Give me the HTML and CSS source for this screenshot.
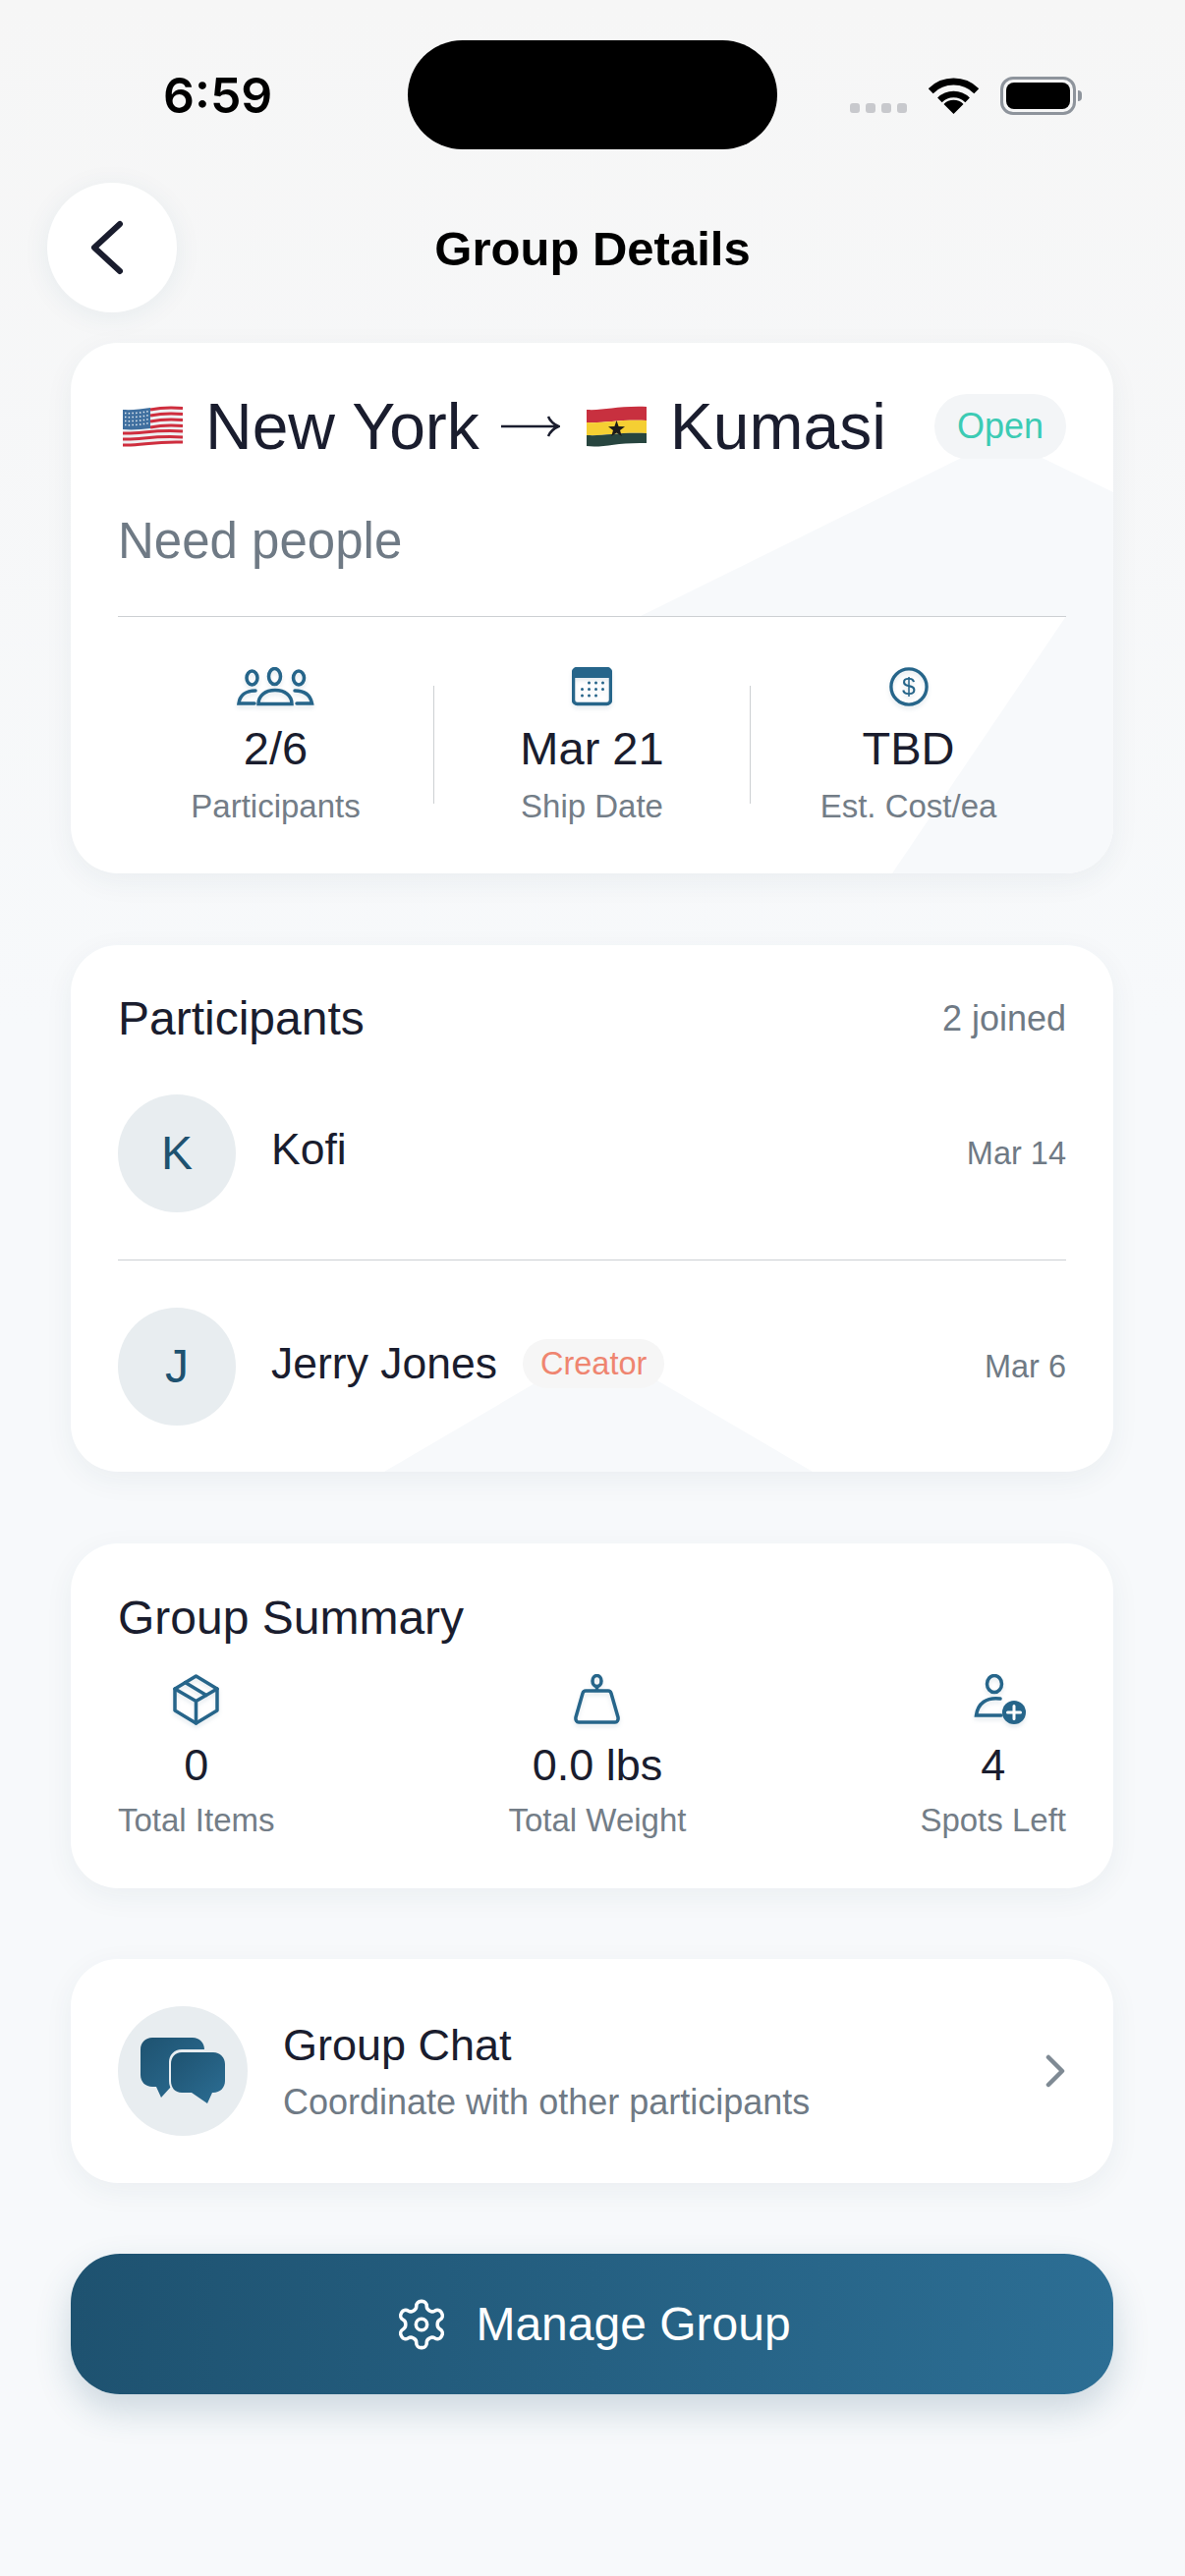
FILE: index.html
```html
<!DOCTYPE html>
<html>
	<head>
		<meta charset="utf-8" />
		<meta name="viewport" content="width=device-width, initial-scale=1" />
		<title>Group Details</title>
		<link rel="stylesheet" href="styles.css">
	</head>
	<body>
		<div id="page">
			<div class="statusbar">
				<div class="time">6:59</div>
				<div class="island"></div>
				<div class="status-icons">
					<div class="signal"><i></i><i></i><i></i><i></i></div>
					<svg class="wifi" width="51" height="37" viewBox="0 0 51 37">
						<path d="M2.2 13.7A33 33 0 0 1 48.8 13.7" fill="none" stroke="#000" stroke-width="7" />
						<path d="M11.4 22.9A20 20 0 0 1 39.6 22.9" fill="none" stroke="#000" stroke-width="6.5" />
						<path d="M25.5 37L15.5 27A14 14 0 0 1 35.5 27Z" fill="#000" />
					</svg>
					<div class="battery"><div class="battery-level"></div></div>
				</div>
			</div>

			<div class="header">
				<div class="back">
					<svg width="38" height="60" viewBox="0 0 38 60"><path d="M32 6L6 30L32 54" fill="none" stroke="#1a1d2e" stroke-width="6" stroke-linecap="round" stroke-linejoin="round" /></svg>
				</div>
				<div class="title">Group Details</div>
			</div>

			<div id="content">
				<div class="card card-route">
					<div class="route">
						<svg class="flag flag-us" width="61" height="42" viewBox="0 0 61 42">
							<path d="M0 4C18 5 30 0 61 1V38C30 37 18 43 0 41Z" fill="#eef0f2" />
							<g fill="none" stroke="#cf2e3e" stroke-width="3">
								<path d="M28 4C40 1.500 50 1.500 61 2.500" />
								<path d="M28 10C40 7.500 50 7.500 61 8.500" />
								<path d="M28 16C40 13.500 50 13.500 61 14.500" />
								<path d="M28 22C40 19.500 50 19.500 61 20.500" />
								<path d="M0 28C18 29 30 24 61 26" />
								<path d="M0 34C18 35 30 30 61 32" />
								<path d="M0 40C18 41 30 36 61 37" />
							</g>
							<path d="M0 4C10 4.500 19 3.500 28 2V23C19 24 10 25 0 24Z" fill="#3f6f9f" />
							<g fill="none" stroke="#e6edf3" stroke-width="1.500" stroke-dasharray="1.500 2.200">
								<path d="M2 7.500C10 8 19 7 26 5.800" />
								<path d="M2 11.500C10 12 19 11 26 9.800" />
								<path d="M2 15.500C10 16 19 15 26 13.800" />
								<path d="M2 19.500C10 20 19 19 26 17.800" />
							</g>
						</svg>
						<span class="place">New York</span>
						<svg class="arrow" width="60" height="24" viewBox="0 0 60 24" aria-label="to"><path d="M0 12H58M48 2C50 7 54 10 58.500 12C54 14 50 17 48 22" fill="none" stroke="#1a1d2e" stroke-width="2.500" /></svg>
						<svg class="flag flag-gh" width="61" height="42" viewBox="0 0 61 42">
							<path d="M0 4C18 5 30 0 61 1V15C30 14 18 18 0 17Z" fill="#c8303f" />
							<path d="M0 17C18 18 30 14 61 15V28C30 27 18 31 0 30Z" fill="#f5cf33" />
							<path d="M0 30C18 31 30 27 61 28V38C30 37 18 43 0 41Z" fill="#27453f" />
							<path d="M30.500 15L32.600 21L39 21.200L34 25L35.800 31L30.500 27.500L25.200 31L27 25L22 21.200L28.400 21Z" fill="#1a1a1a" />
						</svg>
						<span class="place">Kumasi</span>
						<span class="badge badge-open">Open</span>
					</div>
					<div class="note">Need people</div>
					<div class="rule"></div>
					<div class="stats">
						<div class="stat">
							<svg class="icon" width="79" height="40" viewBox="0 0 79 40">
								<ellipse cx="15.500" cy="11" rx="5.500" ry="7" />
								<ellipse cx="38.500" cy="9.500" rx="6" ry="8" />
								<ellipse cx="63" cy="11" rx="5.500" ry="7" />
								<path d="M19 24C9 24 3 29 2 37H18" />
								<path d="M59 24C69 24 75 29 76.500 37H61" />
								<path d="M22 37.500C22 29 29 23.500 39 23.500C49 23.500 56 29 56 37.500Z" />
							</svg>
							<div class="stat-value">2/6</div>
							<div class="stat-label">Participants</div>
						</div>
						<div class="stat-sep"></div>
						<div class="stat">
							<svg class="icon" width="41" height="40" viewBox="0 0 41 40">
								<rect x="1.500" y="1.500" width="38" height="36" rx="4" />
								<path d="M1.500 11V6A4.500 4.500 0 0 1 6 1.500H35A4.500 4.500 0 0 1 39.500 6V11Z" class="solid" />
								<g class="solid">
									<circle cx="17.500" cy="16" r="1.500" /><circle cx="24.500" cy="16" r="1.500" /><circle cx="31.500" cy="16" r="1.500" />
									<circle cx="10.500" cy="22.500" r="1.500" /><circle cx="17.500" cy="22.500" r="1.500" /><circle cx="24.500" cy="22.500" r="1.500" /><circle cx="31.500" cy="22.500" r="1.500" />
									<circle cx="10.500" cy="29" r="1.500" /><circle cx="17.500" cy="29" r="1.500" /><circle cx="24.500" cy="29" r="1.500" />
								</g>
							</svg>
							<div class="stat-value">Mar 21</div>
							<div class="stat-label">Ship Date</div>
						</div>
						<div class="stat-sep"></div>
						<div class="stat">
							<svg class="icon" width="42" height="42" viewBox="0 0 42 42">
								<circle cx="21" cy="21" r="19" />
								<text x="21" y="29.500" text-anchor="middle" class="icon-text">$</text>
							</svg>
							<div class="stat-value">TBD</div>
							<div class="stat-label">Est. Cost/ea</div>
						</div>
					</div>
				</div>

				<div class="card card-people">
					<div class="card-head">
						<div class="card-title">Participants</div>
						<div class="card-count">2 joined</div>
					</div>
					<div class="person">
						<div class="avatar">K</div>
						<div class="person-name">Kofi</div>
						<div class="person-date">Mar 14</div>
					</div>
					<div class="person person-last">
						<div class="avatar">J</div>
						<div class="person-name person-name-badge">Jerry Jones<span class="badge badge-creator">Creator</span></div>
						<div class="person-date">Mar 6</div>
					</div>
				</div>

				<div class="card card-summary">
					<div class="card-title">Group Summary</div>
					<div class="summary">
						<div class="summary-item">
							<svg class="icon" width="47" height="52" viewBox="0 0 47 52">
								<path d="M23.500 2L45 15V37L23.500 50L2 37V15Z" stroke-linejoin="round" />
								<path d="M2 15L23.500 27.500L45 15M23.500 27.500V50M12.500 8.500L34 21.500" />
							</svg>
							<div class="summary-value">0</div>
							<div class="summary-label">Total Items</div>
						</div>
						<div class="summary-item">
							<svg class="icon" width="47" height="52" viewBox="0 0 47 52">
								<ellipse cx="23.500" cy="7" rx="4.500" ry="5.500" />
								<path d="M23.500 12.500V17M12 17H35C36.500 17 37.500 18 38 19.500L45 44C45.500 47 44 49 42 49H5C3 49 1.500 47 2 44L9 19.500C9.500 18 10.500 17 12 17Z" />
							</svg>
							<div class="summary-value">0.0 lbs</div>
							<div class="summary-label">Total Weight</div>
						</div>
						<div class="summary-item">
							<svg class="icon icon-add" width="55" height="52" viewBox="0 0 55 52">
								<ellipse cx="21" cy="10" rx="7.500" ry="8.500" />
								<path d="M27 25C13 23 4 30 2.500 42H28" />
								<circle cx="41" cy="39" r="12" class="solid" />
								<path d="M41 32.500V45.500M34.500 39H47.500" class="plus" />
							</svg>
							<div class="summary-value">4</div>
							<div class="summary-label">Spots Left</div>
						</div>
					</div>
				</div>

				<div class="card card-chat">
					<div class="chat-icon">
						<svg width="87" height="68" viewBox="0 0 87 68">
							<defs>
								<linearGradient id="chat-fill" x1="0" y1="0" x2="1" y2="1">
									<stop offset="0" stop-color="#1e5270" />
									<stop offset="1" stop-color="#2c6e94" />
								</linearGradient>
							</defs>
							<path d="M12 0H53C60 0 65 5 65 12V38C65 45 60 50 53 50H31L21 61L16 50H12C5 50 0 45 0 38V12C0 5 5 0 12 0Z" fill="url(#chat-fill)" />
							<path d="M42 12H74C82 12 87 18 87 25V44C87 52 82 58 74 58H74L70 68L52 58H42C34 58 29 52 29 44V25C29 18 34 12 42 12Z" fill="#e8edf0" />
							<path d="M42 15H74C81 15 86 20 86 27V44C86 51 81 56 74 56H73L68 67L52 56H42C35 56 31 51 31 44V27C31 20 35 15 42 15Z" fill="url(#chat-fill)" />
						</svg>
					</div>
					<div class="chat-text">
						<div class="chat-title">Group Chat</div>
						<div class="chat-sub">Coordinate with other participants</div>
					</div>
					<svg class="chat-go" width="22" height="34" viewBox="0 0 22 34"><path d="M4 3L18 17L4 31" fill="none" stroke="#7f8a94" stroke-width="4.500" stroke-linecap="round" stroke-linejoin="round" /></svg>
				</div>

				<div class="manage">
					<svg width="52" height="52" viewBox="1 1 22 22" fill="none" stroke="#fff" stroke-width="1.500" stroke-linecap="round" stroke-linejoin="round">
						<path d="M12.220 2h-.44a2 2 0 0 0-2 2v.18a2 2 0 0 1-1 1.730l-.43.25a2 2 0 0 1-2 0l-.15-.08a2 2 0 0 0-2.730.73l-.22.38a2 2 0 0 0 .73 2.730l.15.1a2 2 0 0 1 1 1.720v.51a2 2 0 0 1-1 1.740l-.15.09a2 2 0 0 0-.73 2.730l.22.38a2 2 0 0 0 2.730.73l.15-.08a2 2 0 0 1 2 0l.43.25a2 2 0 0 1 1 1.730V20a2 2 0 0 0 2 2h.44a2 2 0 0 0 2-2v-.18a2 2 0 0 1 1-1.730l.43-.25a2 2 0 0 1 2 0l.15.08a2 2 0 0 0 2.730-.73l.22-.39a2 2 0 0 0-.73-2.730l-.15-.08a2 2 0 0 1-1-1.740v-.5a2 2 0 0 1 1-1.740l.15-.09a2 2 0 0 0 .73-2.730l-.22-.38a2 2 0 0 0-2.730-.73l-.15.08a2 2 0 0 1-2 0l-.43-.25a2 2 0 0 1-1-1.730V4a2 2 0 0 0-2-2z" />
						<circle cx="12" cy="12" r="2.400" />
					</svg>
					<span>Manage Group</span>
				</div>
			</div>
		</div>
	</body>
</html>
```

FILE: styles.css
```css
html, body {
	margin: 0; padding: 0;
}
body {
	background: linear-gradient(#f6f6f6, #f7f9fb 40%, #f7f9fb);
	color: #1a1d2e;
	font: 36px "Liberation Sans", Arial, sans-serif;
}
#page {
	width: 1206px; height: 2622px;
	overflow: hidden;
}

/* status bar */
.statusbar {
	display: grid;
	grid-template-columns: 1fr 376px 1fr;
	align-items: center;
	height: 111px;
	padding-top: 41px;
}
.time {
	padding: 0 0 0 166px; margin-top: 1px;
	color: #000;
	font: 600 50px Inter, sans-serif;
}
.island {
	height: 111px;
	border-radius: 56px;
	background-color: #000;
}
.status-icons {
	display: flex;
	align-items: center;
	padding-left: 74px; margin-top: 1px;
}
.signal {
	display: flex;
	gap: 6px;
	margin-top: 26px;
}
.signal i {
	width: 10px; height: 10px;
	border-radius: 3px;
	background-color: #c8c9cd;
}
.wifi {
	margin-left: 22px;
}
.battery {
	position: relative;
	box-sizing: border-box;
	width: 77px; height: 39px; margin-left: 22px; padding: 3px;
	border: 3px solid #8e949c;
	border-radius: 13px;
}
.battery:after {
	content: "";
	position: absolute;
	top: 11px; right: -9px;
	width: 4px; height: 11px;
	border-radius: 0 6px 6px 0;
	background-color: #8e949c;
}
.battery-level {
	height: 100%;
	border-radius: 8px;
	background-color: #000;
}

/* header */
.header {
	display: grid;
	grid-template-columns: 132px 1fr 132px;
	align-items: center;
	height: 132px; margin-top: 34px; padding: 0 48px;
}
.back {
	display: flex;
	align-items: center;
	justify-content: center;
	width: 132px; height: 132px;
	border-radius: 50%;
	background-color: #fff;
	box-shadow: 0 4px 28px rgba(30,82,112,.07);
}
.back svg {
	margin-left: -10px;
}
.title {
	margin-top: 2px;
	color: #000;
	font-size: 49px; font-weight: 700;
	line-height: 1;
	text-align: center;
}

/* cards */
#content {
	display: flex;
	flex-direction: column;
	gap: 72px;
	margin-top: 31px; padding: 0 73px 0 72px;
}
.card {
	position: relative;
	padding: 0 48px;
	border-radius: 48px;
	background-color: #fff;
	box-shadow: 0 8px 30px rgba(40,60,80,.06);
}
.card > * {
	position: relative;
	z-index: 1;
}
.card-route:before, .card-route:after, .card-people:before {
	content: "";
	position: absolute;
	top: 0; left: 0; right: 0; bottom: 0;
	z-index: 0;
	border-radius: 48px;
	background-color: #f7f9fb;
}
.card-route:before {
	clip-path: polygon(580px 278px, 947px 97px, 1061px 152px, 1061px 278px);
}
.card-route:after {
	clip-path: polygon(1013px 278px, 1061px 278px, 1061px 540px, 836px 540px);
}
.card-people:before {
	clip-path: polygon(319px 536px, 537px 408px, 755px 536px);
}
.card-route {
	height: 540px; margin-bottom: 1px; padding-top: 52px;
	box-sizing: border-box;
}
.route {
	display: flex;
	align-items: center;
	height: 66px;
	font-size: 66px;
}
.flag {
	flex: none;
}
.flag-us {
	margin: 0 23px 0 5px;
}
.flag-gh {
	margin: 0 24px 0 0;
}
.arrow {
	flex: none;
	margin: 0 27px 0 22px;
}
.badge {
	border-radius: 33px;
	background-color: #f3f5f7;
}
.badge-open {
	margin-left: auto; padding: 0 23px;
	color: #3ccbb4;
	font-size: 36px;
	line-height: 66px;
}
.badge-creator {
	margin-left: 26px; padding: 0 18px;
	border-radius: 25px;
	background-color: #f6f6f6;
	color: #ef8570;
	font-size: 32.500px;
	line-height: 50px;
}
.note {
	margin-top: 58px;
	color: #6f7a85;
	font-size: 51px;
	line-height: 1;
}
.rule {
	height: 1px; margin-top: 51px;
	background-color: #cdd0d3;
}
.stats {
	display: flex;
	align-items: center;
	margin-top: 51px;
}
.stat {
	flex: 1;
	text-align: center;
}
.stat-sep {
	width: 1px; height: 120px;
	background-color: #cdd0d3;
}
.icon {
	display: block;
	margin: 0 auto;
	fill: none;
	stroke: #26658a;
	stroke-width: 3.500;
	stroke-linecap: round;
	filter: drop-shadow(0 3px 2px rgba(30,82,112,.12));
}
.icon .solid {
	fill: #26658a;
	stroke: none;
}
.icon .plus {
	stroke: #fff;
	stroke-width: 3;
}
.icon-text {
	fill: #26658a;
	stroke: none;
	font-size: 26px;
}
.icon-add {
	transform: translateX(8px);
}
.stat .icon {
	height: 40px;
}
.stat-value {
	margin-top: 19px;
	font-size: 47px;
	line-height: 1;
}
.stat-label {
	margin-top: 19px;
	color: #737d87;
	font-size: 33px;
	line-height: 1;
}

/* participants */
.card-people {
	height: 536px; margin-bottom: 1px; padding-top: 51px;
	box-sizing: border-box;
}
.card-head {
	display: flex;
	align-items: center;
	justify-content: space-between;
}
.card-title {
	font-size: 48px;
	line-height: 1;
}
.card-count {
	color: #6f7a85;
	font-size: 36px;
}
.person {
	display: flex;
	align-items: center;
	gap: 36px;
	padding: 53px 0 48px 0;
	border-bottom: 1px solid #cdd0d3;
}
.person-last {
	padding: 48px 0 0 0;
	border-bottom: none;
}
.avatar {
	width: 120px; height: 120px;
	border-radius: 50%;
	background-color: #e8edf0;
	color: #1e5270;
	font-size: 48px;
	line-height: 120px;
	text-align: center;
}
.person-name {
	flex: 1;
	padding-bottom: 8px;
	font-size: 44.500px;
}
.person-name-badge {
	display: flex;
	align-items: center;
	padding-bottom: 6px;
}
.person-date {
	color: #6f7a85;
	font-size: 32.500px;
}

/* summary */
.card-summary {
	height: 351px; padding-top: 52px;
	box-sizing: border-box;
}
.summary {
	display: flex;
	justify-content: space-between;
	margin-top: 33px;
}
.summary-item {
	text-align: center;
}
.summary-value {
	margin-top: 18px;
	font-size: 45px;
	line-height: 1;
}
.summary-label {
	margin-top: 17px;
	color: #737d87;
	font-size: 33px;
	line-height: 1;
}

/* chat */
.card-chat {
	display: flex;
	align-items: center;
	gap: 36px;
	padding: 48px;
	height: 132px;
}
.chat-icon {
	display: flex;
	align-items: center;
	justify-content: center;
	flex: none;
	width: 132px; height: 132px;
	border-radius: 50%;
	background-color: #e8edf0;
}
.chat-text {
	flex: 1;
}
.chat-title {
	font-size: 45px;
	line-height: 1;
}
.chat-sub {
	margin-top: 18px;
	color: #6f7a85;
	font-size: 36px;
	line-height: 1;
}

/* manage button */
.manage {
	display: flex;
	align-items: center;
	justify-content: center;
	gap: 29px;
	height: 143px; padding-left: 3px;
	border-radius: 50px;
	background: linear-gradient(90deg, #1e5270, #2c6e94);
	box-shadow: 0 16px 36px rgba(30,82,112,.2);
	color: #fff;
	font-size: 48px;
}
```
